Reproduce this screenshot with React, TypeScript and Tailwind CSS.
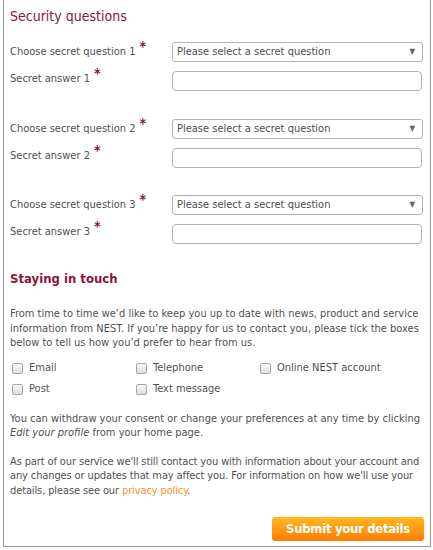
import React from "react";

const Star = () => (
  <span className="relative top-[-4px] ml-[4px] text-[14px] font-bold leading-none text-[#8a1538]">*</span>
);

const Select = () => (
  <div className="flex h-[20px] w-[251px] items-center justify-between rounded-[3px] border border-[#b3b3b3] bg-white pl-[4px] pr-[7px] text-[11px] text-[#4d4d4d]">
    <span>Please select a secret question</span>
    <span className="text-[8px] text-[#666]">▼</span>
  </div>
);

const Input = () => (
  <div className="h-[20px] w-[250px] rounded-[4px] border border-[#b3b3b3] bg-white" />
);

const Group = ({ n, mt }: { n: number; mt: string }) => (
  <div className={mt}>
    <div className="flex h-[20px] items-start">
      <div className="w-[162px] pt-[1px] leading-[14px]">
        Choose secret question {n}
        <Star />
      </div>
      <Select />
    </div>
    <div className="mt-[9px] flex h-[20px] items-start">
      <div className="w-[162px] leading-[14px] -mt-[1px]">
        Secret answer {n}
        <Star />
      </div>
      <Input />
    </div>
  </div>
);

const Check = ({ label, w }: { label: string; w: string }) => (
  <div className={`flex items-center ${w}`}>
    <span className="mr-[6px] ml-[2px] inline-block h-[11px] w-[11px] rounded-[2px] border border-[#a6a6a6] bg-gradient-to-b from-[#fafafa] to-[#dcdcdc]" />
    <span>{label}</span>
  </div>
);

export default function App() {
  return (
    <div className="bg-white pl-[3px]" style={{ fontFamily: '"DejaVu Sans Condensed", "DejaVu Sans", sans-serif' }}>
      <div className="h-[547px] w-[428px] border-x border-b border-[#9a9a9a] pl-[6px] text-[11px] text-[#505050]">
        <div className="pt-[6px] text-[14px] leading-[20px] text-[#8a1538]">Security questions</div>
        <Group n={1} mt="mt-[16px]" />
        <Group n={2} mt="mt-[28px]" />
        <Group n={3} mt="mt-[27px]" />
        <div className="mt-[26px] text-[13px] font-bold leading-[18px] text-[#8a1538]">Staying in touch</div>
        <p className="mt-[19px] pr-[2px] leading-[14.5px]">
          From time to time we’d like to keep you up to date with news, product and service information from NEST. If you’re happy for us to contact you, please tick the boxes below to tell us how you’d prefer to hear from us.
        </p>
        <div className="mt-[10px] flex h-[16px] items-center">
          <Check label="Email" w="w-[124px]" />
          <Check label="Telephone" w="w-[124px]" />
          <Check label="Online NEST account" w="" />
        </div>
        <div className="mt-[5px] flex h-[16px] items-center">
          <Check label="Post" w="w-[124px]" />
          <Check label="Text message" w="" />
        </div>
        <p className="mt-[14px] pr-[2px] leading-[14.5px]">
          You can withdraw your consent or change your preferences at any time by clicking <em>Edit your profile</em> from your home page.
        </p>
        <p className="mt-[14px] pr-0 leading-[14.5px] tracking-[-0.12px]">
          As part of our service we'll still contact you with information about your account and any changes or updates that may affect you. For information on how we'll use your details, please see our <span className="text-[#f7941d]">privacy policy</span>.
        </p>
        <div className="mt-[19px] flex justify-end pr-[6px]">
          <div className="flex h-[24px] w-[152px] items-center justify-center rounded-[3px] bg-gradient-to-b from-[#ffb820] to-[#ff7a00] text-[13px] font-bold tracking-[-0.3px] text-white">
            Submit your details
          </div>
        </div>
      </div>
    </div>
  );
}
